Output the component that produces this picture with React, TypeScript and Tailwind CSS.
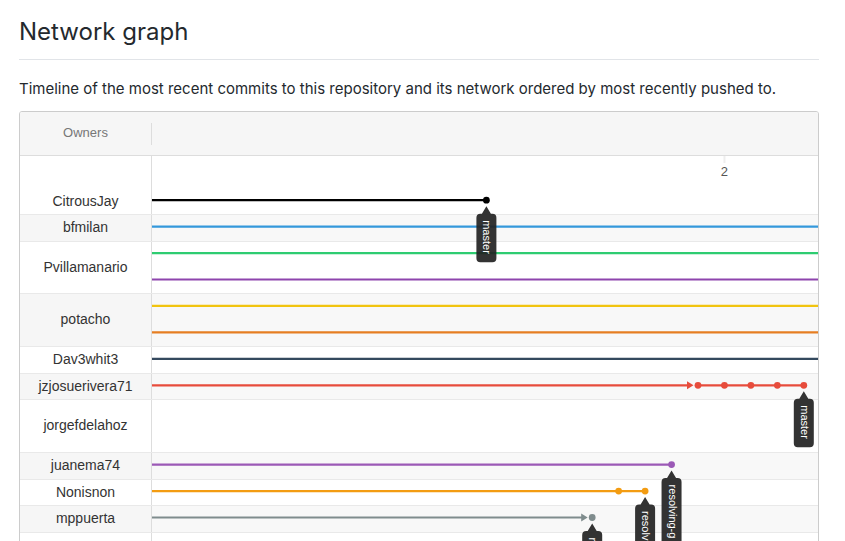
type Owner = { name: string; height: string; shaded: boolean };

const owners: Owner[] = [
  { name: "bfmilan", height: "h-[27px]", shaded: true },
  { name: "Pvillamanario", height: "h-[52px]", shaded: false },
  { name: "potacho", height: "h-[53px]", shaded: true },
  { name: "Dav3whit3", height: "h-[27px]", shaded: false },
  { name: "jzjosuerivera71", height: "h-[26px]", shaded: true },
  { name: "jorgefdelahoz", height: "h-[53px]", shaded: false },
  { name: "juanema74", height: "h-[27px]", shaded: true },
  { name: "Nonisnon", height: "h-[26px]", shaded: false },
  { name: "mppuerta", height: "h-[27px]", shaded: true },
];

type Lane = {
  lane: number;
  color: string;
  // Column of the last commit; lanes without one run off the right edge.
  end?: number;
  arrow?: number;
  commits?: number[];
};

const lanes: Lane[] = [
  { lane: 0, color: "#000000", end: 12, commits: [12] },
  { lane: 1, color: "#3498db" },
  { lane: 2, color: "#2ecc71" },
  { lane: 3, color: "#8e44ad" },
  { lane: 4, color: "#f1c40f" },
  { lane: 5, color: "#e67e22" },
  { lane: 6, color: "#34495e" },
  { lane: 7, color: "#e74c3c", end: 24, arrow: 20, commits: [20, 21, 22, 23, 24] },
  { lane: 10, color: "#9b59b6", end: 19, commits: [19] },
  { lane: 11, color: "#f39c12", end: 18, commits: [17, 18] },
  { lane: 12, color: "#7f8c8d", end: 16, arrow: 16, commits: [16] },
];

const tags = [
  { lane: 0, column: 12, text: "master", length: 49 },
  { lane: 7, column: 24, text: "master", length: 49 },
  { lane: 10, column: 19, text: "resolving-g", length: 90 },
  { lane: 11, column: 18, text: "resolv", length: 90 },
  { lane: 12, column: 16, text: "r", length: 90 },
];

const columnX = (column: number) => 17 + column * 26.45;
const laneY = (lane: number) => 44.2 + lane * 26.44;

function Graph() {
  return (
    <svg className="absolute inset-y-0 right-0 left-[132px] h-full w-[calc(100%-132px)] overflow-hidden" aria-label="Commit graph">
      <line x1={columnX(21)} x2={columnX(21)} y1="0" y2="7" stroke="#eeeeee" strokeWidth="2" />
      <text x={columnX(21)} y="20" textAnchor="middle" fontSize="13" fill="#555555">
        2
      </text>
      {lanes.map(({ lane, color, end, arrow, commits = [] }) => {
        const y = laneY(lane);
        return (
          <g key={lane} fill={color} stroke={color}>
            {arrow === undefined ? (
              <line x1="0" x2={end === undefined ? "100%" : columnX(end)} y1={y} y2={y} strokeWidth="2.2" />
            ) : (
              <>
                <line x1="0" x2={columnX(arrow) - 10} y1={y} y2={y} strokeWidth="2.2" />
                <path d={`M${columnX(arrow) - 11} ${y - 4}l6.5 4l-6.5 4z`} stroke="none" />
                <line x1={columnX(arrow)} x2={columnX(end ?? arrow)} y1={y} y2={y} strokeWidth="2.2" />
              </>
            )}
            {commits.map((column) => (
              <circle key={column} cx={columnX(column)} cy={y} r="3.4" stroke="none" />
            ))}
          </g>
        );
      })}
      {tags.map(({ lane, column, text, length }) => (
        <g key={`${lane}-${column}`} transform={`translate(${columnX(column)} ${laneY(lane)})`}>
          <path
            d={`M0 6L4.5 13.5H6a4 4 0 0 1 4 4V${9 + length}a4 4 0 0 1 -4 4H-6a4 4 0 0 1 -4 -4V17.5a4 4 0 0 1 4 -4H-4.5z`}
            fill="#222222"
            fillOpacity="0.92"
          />
          <text transform="rotate(90)" x="20" y="3" fontSize="11" fill="#ffffff">
            {text}
          </text>
        </g>
      ))}
    </svg>
  );
}

export default function App() {
  return (
    <main className="h-screen overflow-hidden bg-white pt-3 pr-[26px] pl-[19px] font-['Inter',sans-serif] text-[#24292e]">
      <h1 className="border-b border-[#e1e4e8] pb-2 text-[24px] leading-[39px]">Network graph</h1>
      <p className="mt-[17px] mb-[10px] text-[15px] leading-6">
        Timeline of the most recent commits to this repository and its network ordered by most recently pushed to.
      </p>
      <section className="overflow-hidden rounded-[3px] border border-[#cccccc] font-['Liberation_Sans',Arial,sans-serif]">
        <header className="flex h-11 items-center border-b border-[#dddddd] bg-[#f6f6f6]">
          <h2 className="h-[22px] w-[132px] border-r border-[#dddddd] text-center text-[13px] leading-5 text-[#777777]">
            Owners
          </h2>
        </header>
        <div className="relative text-[14px] text-[#333333]">
          <div className="flex h-[58px]">
            <div className="flex w-[132px] items-end justify-center border-r border-[#dddddd] pb-[2px]">
              <span className="leading-[22px]">CitrousJay</span>
            </div>
          </div>
          {owners.map(({ name, height, shaded }) => (
            <div
              key={name}
              className={`flex border-t border-[#e9e9e9] ${height} ${shaded ? "bg-[#f8f8f8]" : "bg-white"}`}
            >
              <div
                className={`flex w-[132px] items-center justify-center border-r border-[#dddddd] pb-px ${shaded ? "bg-[#f6f6f6]" : ""}`}
              >
                {name}
              </div>
            </div>
          ))}
          <div className="flex h-[53px] border-t border-[#e9e9e9]">
            <div className="w-[132px] border-r border-[#dddddd]" />
          </div>
          <Graph />
        </div>
      </section>
    </main>
  );
}
